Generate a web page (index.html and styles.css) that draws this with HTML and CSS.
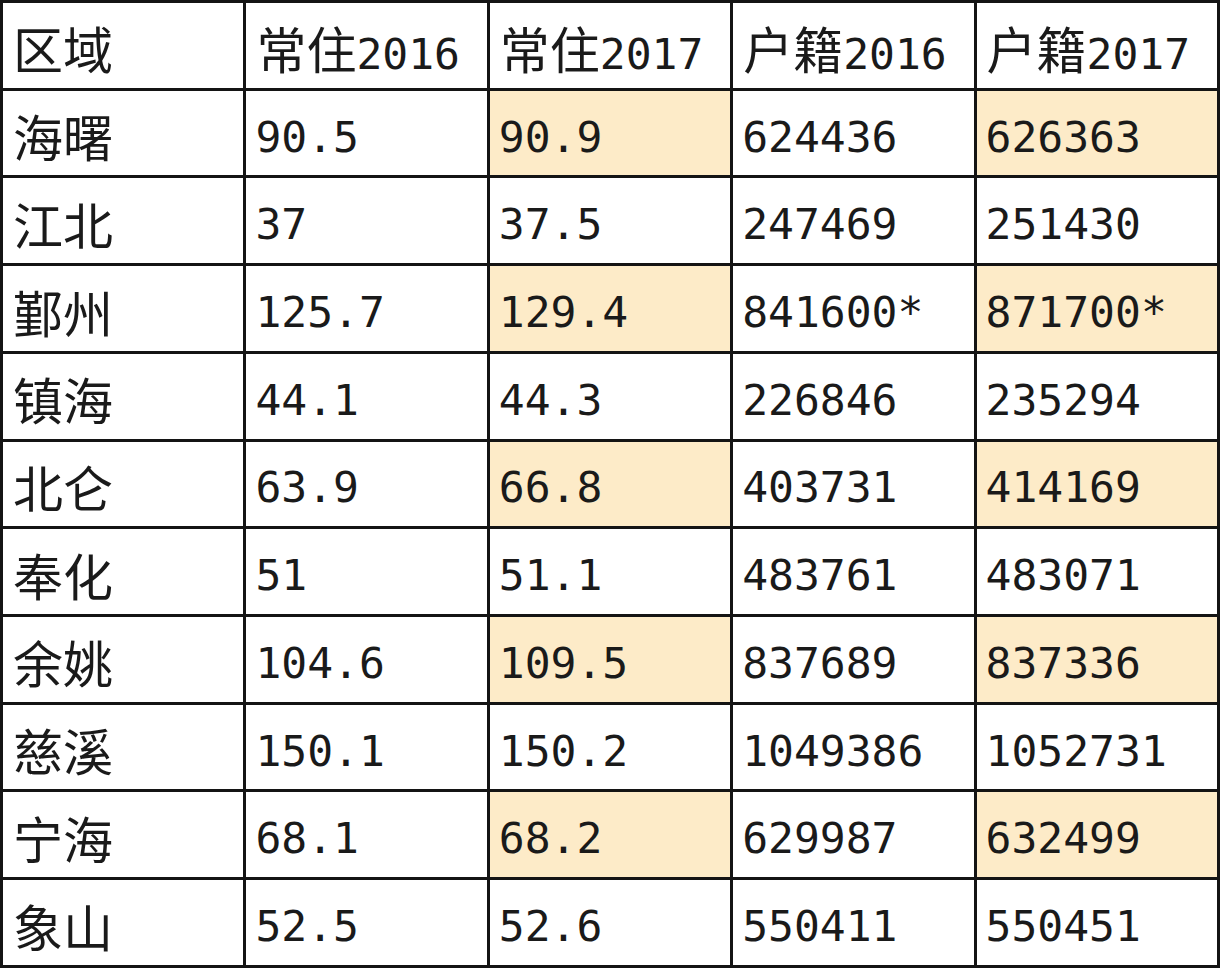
FILE: index.html
```html
<!DOCTYPE html>
<html lang="zh">
<head>
<meta charset="utf-8">
<title>宁波各区域人口</title>
<link rel="stylesheet" href="styles.css">
</head>
<body>
<table class="grid">
  <tr><td><span class="zh">区域</span></td><td><span class="zh">常住</span>2016</td><td><span class="zh">常住</span>2017</td><td><span class="zh">户籍</span>2016</td><td><span class="zh">户籍</span>2017</td></tr>
  <tr><td><span class="zh">海曙</span></td><td>90.5</td><td class="hl">90.9</td><td>624436</td><td class="hl">626363</td></tr>
  <tr><td><span class="zh">江北</span></td><td>37</td><td>37.5</td><td>247469</td><td>251430</td></tr>
  <tr><td><span class="zh">鄞州</span></td><td>125.7</td><td class="hl">129.4</td><td>841600*</td><td class="hl">871700*</td></tr>
  <tr><td><span class="zh">镇海</span></td><td>44.1</td><td>44.3</td><td>226846</td><td>235294</td></tr>
  <tr><td><span class="zh">北仑</span></td><td>63.9</td><td class="hl">66.8</td><td>403731</td><td class="hl">414169</td></tr>
  <tr><td><span class="zh">奉化</span></td><td>51</td><td>51.1</td><td>483761</td><td>483071</td></tr>
  <tr><td><span class="zh">余姚</span></td><td>104.6</td><td class="hl">109.5</td><td>837689</td><td class="hl">837336</td></tr>
  <tr><td><span class="zh">慈溪</span></td><td>150.1</td><td>150.2</td><td>1049386</td><td>1052731</td></tr>
  <tr><td><span class="zh">宁海</span></td><td>68.1</td><td class="hl">68.2</td><td>629987</td><td class="hl">632499</td></tr>
  <tr><td><span class="zh">象山</span></td><td>52.5</td><td>52.6</td><td>550411</td><td>550451</td></tr>
</table>
</body>
</html>
```
FILE: styles.css
```css
html, body {
  margin: 0;
  padding: 0;
  background: #ffffff;
}

.grid {
  border-collapse: collapse;
  table-layout: fixed;
  width: 1220px;
  height: 968px;
  border: 3px solid #141414;
  color: #1a1a1a;
  font-family: "DejaVu Sans Mono", "Liberation Mono", monospace;
  font-size: 43px;
}

.grid td {
  border: 3px solid #141414;
  padding: 8px 0 0 9px;
  vertical-align: middle;
  white-space: nowrap;
  line-height: 1;
}

.grid .hl {
  background: #fdebc8;
}

.zh {
  font-family: "Noto Sans CJK SC", sans-serif;
  font-size: 50px;
  font-weight: 400;
  display: inline-block;
  margin-left: 1px;
  vertical-align: 0;
}
```
